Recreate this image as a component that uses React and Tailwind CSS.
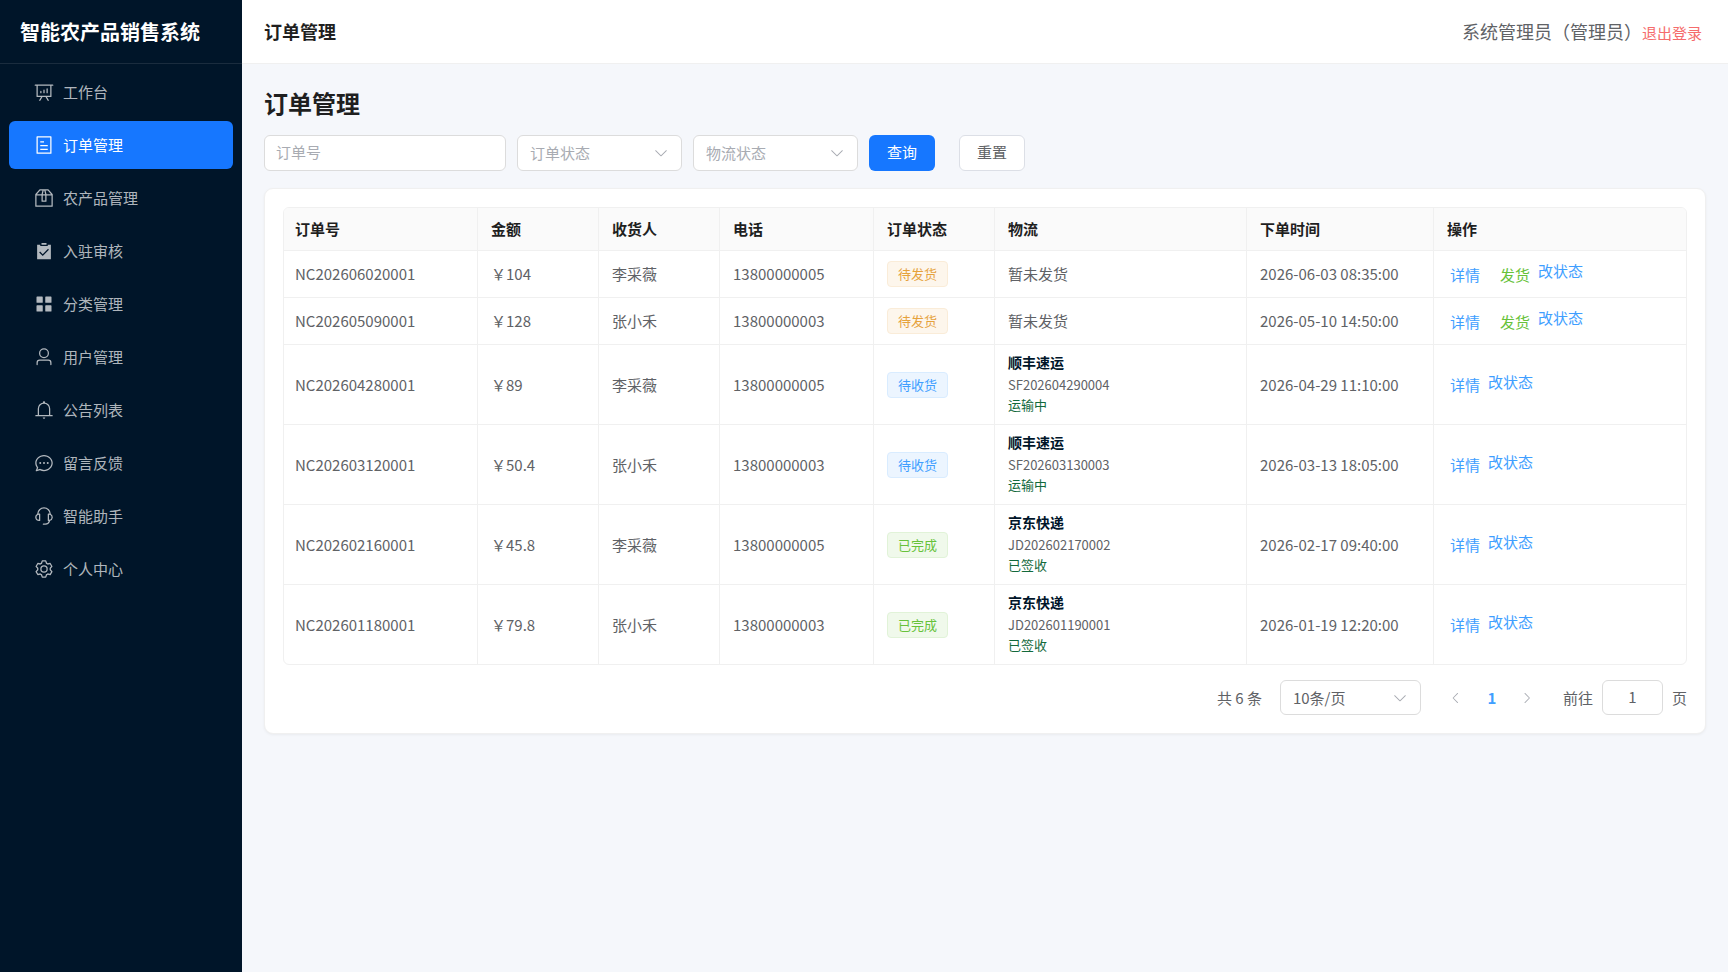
import React, { useState } from 'react';

const ICONS = {
  analysis: 'm665.216 768 110.848 192h-73.856L591.36 768H433.024L322.176 960H248.32l110.848-192H160a32 32 0 0 1-32-32V192H64a32 32 0 0 1 0-64h896a32 32 0 1 1 0 64h-64v544a32 32 0 0 1-32 32zM832 192H192v512h640zM352 448a32 32 0 0 1 32 32v64a32 32 0 0 1-64 0v-64a32 32 0 0 1 32-32m160-64a32 32 0 0 1 32 32v128a32 32 0 0 1-64 0V416a32 32 0 0 1 32-32m160-64a32 32 0 0 1 32 32v192a32 32 0 1 1-64 0V352a32 32 0 0 1 32-32',
  tickets: 'M192 128v768h640V128zm-32-64h704a32 32 0 0 1 32 32v832a32 32 0 0 1-32 32H160a32 32 0 0 1-32-32V96a32 32 0 0 1 32-32m160 448h384v64H320zm0-192h192v64H320zm0 384h384v64H320z',
  box: 'M317.056 128 128 344.064V896h768V344.064L706.944 128zm-14.528-64h418.944a32 32 0 0 1 24.064 10.88l206.528 236.096A32 32 0 0 1 960 332.032V928a32 32 0 0 1-32 32H96a32 32 0 0 1-32-32V332.032a32 32 0 0 1 7.936-21.12L278.4 75.008A32 32 0 0 1 302.528 64M64 320h896v64H64zM448 327.872V640h128V327.872L526.08 128h-28.16zM448 64h128l64 256v352a32 32 0 0 1-32 32H416a32 32 0 0 1-32-32V320z',
  checked: 'M704 192h160v736H160V192h160.064v64H704zM311.616 537.28l-45.312 45.248L447.36 763.52l316.8-316.8-45.312-45.184L447.36 673.024zM384 192V96h256v96z',
  menu: 'M160 448a32 32 0 0 1-32-32V160.064a32 32 0 0 1 32-32h256a32 32 0 0 1 32 32V416a32 32 0 0 1-32 32zm448 0a32 32 0 0 1-32-32V160.064a32 32 0 0 1 32-32h255.936a32 32 0 0 1 32 32V416a32 32 0 0 1-32 32zM160 896a32 32 0 0 1-32-32V608a32 32 0 0 1 32-32h256a32 32 0 0 1 32 32v256a32 32 0 0 1-32 32zm448 0a32 32 0 0 1-32-32V608a32 32 0 0 1 32-32h255.936a32 32 0 0 1 32 32v256a32 32 0 0 1-32 32z',
  user: 'M512 512a192 192 0 1 0 0-384 192 192 0 0 0 0 384m0 64a256 256 0 1 1 0-512 256 256 0 0 1 0 512m320 320v-96a96 96 0 0 0-96-96H288a96 96 0 0 0-96 96v96a32 32 0 1 1-64 0v-96a160 160 0 0 1 160-160h448a160 160 0 0 1 160 160v96a32 32 0 1 1-64 0',
  bell: 'M512 64a64 64 0 0 1 64 64v64H448v-64a64 64 0 0 1 64-64M256 768h512V448a256 256 0 1 0-512 0zm256-640a320 320 0 0 1 320 320v384H192V448a320 320 0 0 1 320-320M96 768h832q32 0 32 32t-32 32H96q-32 0-32-32t32-32m352 128h128a64 64 0 0 1-128 0',
  chat: 'm174.72 855.68 135.296-45.12 23.68 11.84C388.096 849.536 448.576 864 512 864c211.84 0 384-166.784 384-352S723.84 160 512 160 128 326.784 128 512c0 69.12 24.96 139.264 70.848 199.232l22.08 28.8-46.272 115.584zm-45.248 82.56A32 32 0 0 1 89.6 896l58.368-145.92C94.72 680.32 64 596.864 64 512 64 299.904 256 96 512 96s448 203.904 448 416-192 416-448 416a461.06 461.06 0 0 1-206.912-48.384l-175.616 58.56zM512 563.2a51.2 51.2 0 1 1 0-102.4 51.2 51.2 0 0 1 0 102.4m192 0a51.2 51.2 0 1 1 0-102.4 51.2 51.2 0 0 1 0 102.4m-384 0a51.2 51.2 0 1 1 0-102.4 51.2 51.2 0 0 1 0 102.4',
  service: 'M864 409.6a192 192 0 0 1-37.888 349.44A256.064 256.064 0 0 1 576 960h-96a32 32 0 1 1 0-64h96a192.064 192.064 0 0 0 181.12-128H736a32 32 0 0 1-32-32V416a32 32 0 0 1 32-32h32c10.368 0 20.544.832 30.528 2.432a288 288 0 0 0-573.056 0A193 193 0 0 1 256 384h32a32 32 0 0 1 32 32v320a32 32 0 0 1-32 32h-32a192 192 0 0 1-96-358.4 352 352 0 0 1 704 0M256 448a128 128 0 1 0 0 256zm640 128a128 128 0 0 0-128-128v256a128 128 0 0 0 128-128',
  setting: 'M600.704 64a32 32 0 0 1 30.464 22.208l35.2 109.376c14.784 7.232 28.928 15.36 42.432 24.512l112.384-24.192a32 32 0 0 1 34.432 15.36L944.32 364.8a32 32 0 0 1-4.032 37.504l-77.12 85.12a357 357 0 0 1 0 49.024l77.12 85.248a32 32 0 0 1 4.032 37.504l-88.704 153.6a32 32 0 0 1-34.432 15.296L708.8 803.904c-13.44 9.088-27.648 17.28-42.368 24.512l-35.264 109.376A32 32 0 0 1 600.704 960H423.296a32 32 0 0 1-30.464-22.208L357.696 828.48a352 352 0 0 1-42.56-24.64l-112.32 24.256a32 32 0 0 1-34.432-15.36L79.68 659.2a32 32 0 0 1 4.032-37.504l77.12-85.248a357 357 0 0 1 0-48.896l-77.12-85.248A32 32 0 0 1 79.68 364.8l88.704-153.6a32 32 0 0 1 34.432-15.296l112.32 24.256c13.568-9.152 27.776-17.408 42.56-24.64l35.2-109.312A32 32 0 0 1 423.232 64H600.64zm-23.424 64H446.72l-36.352 113.088-24.512 11.968a294 294 0 0 0-34.816 20.096l-22.656 15.36-116.224-25.088-65.28 113.152 79.68 88.192-1.92 27.136a293 293 0 0 0 0 40.192l1.92 27.136-79.808 88.192 65.344 113.152 116.224-25.024 22.656 15.296a294 294 0 0 0 34.816 20.096l24.512 11.968L446.72 896h130.688l36.48-113.152 24.448-11.904a288 288 0 0 0 34.752-20.096l22.592-15.296 116.288 25.024 65.28-113.152-79.744-88.192 1.92-27.136a293 293 0 0 0 0-40.256l-1.92-27.136 79.808-88.128-65.344-113.152-116.288 24.96-22.592-15.232a288 288 0 0 0-34.752-20.096l-24.448-11.904L577.344 128zM512 320a192 192 0 1 1 0 384 192 192 0 0 1 0-384m0 64a128 128 0 1 0 0 256 128 128 0 0 0 0-256',
  down: 'M831.872 340.864 512 652.672 192.128 340.864a30.59 30.59 0 0 0-42.752 0 29.12 29.12 0 0 0 0 41.6L489.664 714.24a32 32 0 0 0 44.672 0l340.288-331.712a29.12 29.12 0 0 0 0-41.728 30.59 30.59 0 0 0-42.752 0z',
  left: 'M609.408 149.376 277.76 489.6a32 32 0 0 0 0 44.672l331.648 340.352a29.12 29.12 0 0 0 41.728 0 30.59 30.59 0 0 0 0-42.752L339.264 511.936l311.872-319.872a30.59 30.59 0 0 0 0-42.688 29.12 29.12 0 0 0-41.728 0z',
  right: 'M340.864 149.312a30.59 30.59 0 0 0 0 42.752L652.736 512 340.864 831.872a30.59 30.59 0 0 0 0 42.752 29.12 29.12 0 0 0 41.728 0L714.24 534.336a32 32 0 0 0 0-44.672L382.592 149.376a29.12 29.12 0 0 0-41.728 0z'
};

const MENU = [
  { icon: 'analysis', label: '工作台' },
  { icon: 'tickets', label: '订单管理' },
  { icon: 'box', label: '农产品管理' },
  { icon: 'checked', label: '入驻审核' },
  { icon: 'menu', label: '分类管理' },
  { icon: 'user', label: '用户管理' },
  { icon: 'bell', label: '公告列表' },
  { icon: 'chat', label: '留言反馈' },
  { icon: 'service', label: '智能助手' },
  { icon: 'setting', label: '个人中心' }
];

const ORDERS = [
  { no: 'NC202606020001', amount: '104', receiver: '李采薇', phone: '13800000005', status: '待发货', time: '2026-06-03 08:35:00' },
  { no: 'NC202605090001', amount: '128', receiver: '张小禾', phone: '13800000003', status: '待发货', time: '2026-05-10 14:50:00' },
  { no: 'NC202604280001', amount: '89', receiver: '李采薇', phone: '13800000005', status: '待收货', company: '顺丰速运', trackingNo: 'SF202604290004', progress: '运输中', time: '2026-04-29 11:10:00' },
  { no: 'NC202603120001', amount: '50.4', receiver: '张小禾', phone: '13800000003', status: '待收货', company: '顺丰速运', trackingNo: 'SF202603130003', progress: '运输中', time: '2026-03-13 18:05:00' },
  { no: 'NC202602160001', amount: '45.8', receiver: '李采薇', phone: '13800000005', status: '已完成', company: '京东快递', trackingNo: 'JD202602170002', progress: '已签收', time: '2026-02-17 09:40:00' },
  { no: 'NC202601180001', amount: '79.8', receiver: '张小禾', phone: '13800000003', status: '已完成', company: '京东快递', trackingNo: 'JD202601190001', progress: '已签收', time: '2026-01-19 12:20:00' }
];

const COLUMNS = [
  { title: '订单号', width: 'w-[194px]' },
  { title: '金额', width: 'w-[121px]' },
  { title: '收货人', width: 'w-[121px]' },
  { title: '电话', width: 'w-[154px]' },
  { title: '订单状态', width: 'w-[121px]' },
  { title: '物流', width: 'w-[252px]' },
  { title: '下单时间', width: 'w-[187px]' },
  { title: '操作', width: '' }
];

const TAG_STYLES = {
  待发货: 'border-[#faecd8] bg-[#fdf6ec] text-[#e6a23c]',
  待收货: 'border-[#d9ecff] bg-[#ecf5ff] text-[#409eff]',
  已完成: 'border-[#e1f3d8] bg-[#f0f9eb] text-[#67c23a]'
};

const Icon = ({ name, className }) => (
  <svg viewBox="0 0 1024 1024" fill="currentColor" className={className} aria-hidden="true">
    <path d={ICONS[name]} />
  </svg>
);

const SelectBox = ({ label, options, value, onChange, className }) => (
  <div className={`relative ${className}`}>
    <select
      aria-label={label}
      value={value}
      onChange={(e) => onChange(e.target.value)}
      className={`h-full w-full appearance-none rounded-md border border-[#dcdcdc] bg-white pl-3 pr-8 outline-none ${value ? 'text-[#606266]' : 'text-[#a8abb2]'}`}
    >
      {options.map((option) => (
        <option key={option.value} value={option.value}>{option.text}</option>
      ))}
    </select>
    <Icon name="down" className="pointer-events-none absolute right-[13px] top-1/2 h-4 w-4 -translate-y-1/2 text-[#a8abb2]" />
  </div>
);

const Logistics = ({ order }) => {
  if (!order.company) {
    return <span>暂未发货</span>;
  }
  return (
    <div className="pb-1 text-[13px] leading-5">
      <div className="mb-[2px] text-sm font-bold leading-[22px] text-[#001529]">{order.company}</div>
      <div>{order.trackingNo}</div>
      <div className="text-[#12693c]">{order.progress}</div>
    </div>
  );
};

const App = () => {
  const [active, setActive] = useState('订单管理');
  const [orderNo, setOrderNo] = useState('');
  const [orderStatus, setOrderStatus] = useState('');
  const [shipStatus, setShipStatus] = useState('');
  const [pageSize, setPageSize] = useState('10');
  const [page, setPage] = useState('1');

  const handleReset = () => {
    setOrderNo('');
    setOrderStatus('');
    setShipStatus('');
  };

  return (
    <div className="flex min-h-screen bg-[#f5f7fb] font-['Noto_Sans_CJK_SC',sans-serif] text-[15px] leading-6 text-[#606266]">
      {/* Sidebar */}
      <aside className="w-[242px] shrink-0 bg-[#001529]">
        <div className="flex h-16 items-center border-b border-white/10 px-5 text-xl font-bold text-white">
          智能农产品销售系统
        </div>
        <nav className="flex flex-col gap-[5px] px-[9px] py-1">
          {MENU.map((item) => (
            <a
              key={item.label}
              href="#"
              onClick={() => setActive(item.label)}
              className={`flex h-12 items-center gap-[9px] rounded-md pl-[25px] ${active === item.label ? 'bg-[#1677ff] text-white' : 'text-white/70'}`}
            >
              <Icon name={item.icon} className="h-5 w-5" />
              <span>{item.label}</span>
            </a>
          ))}
        </nav>
      </aside>

      <div className="flex min-w-0 flex-1 flex-col">
        {/* Header */}
        <header className="flex h-16 items-center justify-between border-b border-[#f0f0f0] bg-white pb-[2px] pl-[22px] pr-[26px]">
          <span className="text-lg font-bold text-[#1f1f1f]">订单管理</span>
          <div className="flex items-center">
            <span className="text-lg">系统管理员（管理员）</span>
            <button type="button" className="pt-1 text-[#f56c6c]">退出登录</button>
          </div>
        </header>

        <main className="px-[22px] pt-[21px]">
          <h1 className="text-2xl font-bold leading-9 text-[#1f1f1f]">订单管理</h1>

          {/* Filters */}
          <form className="mt-[14px] flex h-9 gap-[11px]" onSubmit={(e) => e.preventDefault()}>
            <input
              type="text"
              aria-label="订单号"
              placeholder="订单号"
              value={orderNo}
              onChange={(e) => setOrderNo(e.target.value)}
              className="w-[242px] rounded-md border border-[#dcdcdc] bg-white px-[11px] pb-[2px] outline-none placeholder:text-[#a8abb2]"
            />
            <SelectBox
              label="订单状态"
              value={orderStatus}
              onChange={setOrderStatus}
              className="w-[165px]"
              options={[
                { value: '', text: '订单状态' },
                { value: '待发货', text: '待发货' },
                { value: '待收货', text: '待收货' },
                { value: '已完成', text: '已完成' }
              ]}
            />
            <SelectBox
              label="物流状态"
              value={shipStatus}
              onChange={setShipStatus}
              className="w-[165px]"
              options={[
                { value: '', text: '物流状态' },
                { value: '运输中', text: '运输中' },
                { value: '已签收', text: '已签收' }
              ]}
            />
            <button type="submit" className="w-[66px] rounded-md bg-[#1677ff] pb-[2px] text-white">查询</button>
            <button
              type="button"
              onClick={handleReset}
              className="ml-[13px] w-[66px] rounded-md border border-[#dcdfe6] bg-white pb-[2px]"
            >
              重置
            </button>
          </form>

          {/* Order table */}
          <section className="mt-[17px] rounded-[9px] border border-[#f0f0f0] bg-white p-[18px] shadow-[0_1px_3px_rgba(0,0,0,0.05)]">
            <div className="overflow-hidden rounded-md border border-[#f0f0f0]">
              <table className="w-full table-fixed border-separate border-spacing-0 text-left">
                <thead>
                  <tr className="h-[43px] bg-[#fafafa] text-[#1f1f1f]">
                    {COLUMNS.map((col) => (
                      <th
                        key={col.title}
                        scope="col"
                        className={`border-b border-r border-[#f0f0f0] px-[13px] font-bold first:pl-[11px] last:border-r-0 ${col.width}`}
                      >
                        {col.title}
                      </th>
                    ))}
                  </tr>
                </thead>
                <tbody className="[&_td]:border-b [&_td]:border-r [&_td]:border-[#f0f0f0] [&_td]:px-[13px] [&_td:first-child]:pl-[11px] [&_td:last-child]:border-r-0 [&_tr:last-child_td]:border-b-0">
                  {ORDERS.map((order) => (
                    <tr key={order.no} className={order.company ? 'h-20 last:h-[79px]' : 'h-[47px]'}>
                      <td>{order.no}</td>
                      <td>￥{order.amount}</td>
                      <td>{order.receiver}</td>
                      <td>{order.phone}</td>
                      <td>
                        <span className={`inline-flex h-[26px] items-center rounded border px-[10px] align-middle text-[13px] ${TAG_STYLES[order.status]}`}>
                          {order.status}
                        </span>
                      </td>
                      <td><Logistics order={order} /></td>
                      <td>{order.time}</td>
                      <td>
                        <div className="flex items-center pl-[3px] text-[#409eff]">
                          <button type="button" className="pt-px">详情</button>
                          {order.status === '待发货' && (
                            <button type="button" className="ml-5 pt-px text-[#67c23a]">发货</button>
                          )}
                          <button type="button" className="ml-2 pb-[6px]">改状态</button>
                        </div>
                      </td>
                    </tr>
                  ))}
                </tbody>
              </table>
            </div>

            {/* Pagination */}
            <div className="mt-[15px] flex h-[35px] items-center justify-end">
              <span className="mr-[18px]">共 6 条</span>
              <SelectBox
                label="每页条数"
                value={pageSize}
                onChange={setPageSize}
                className="h-full w-[141px]"
                options={[
                  { value: '10', text: '10条/页' },
                  { value: '20', text: '20条/页' },
                  { value: '50', text: '50条/页' }
                ]}
              />
              <div className="ml-[18px] flex text-[#a8abb2]">
                <button type="button" aria-label="上一页" disabled className="flex w-[35px] items-center justify-center">
                  <Icon name="left" className="h-[14px] w-[14px]" />
                </button>
                <button type="button" className="w-9 font-bold text-[#409eff]">1</button>
                <button type="button" aria-label="下一页" disabled className="flex w-[35px] items-center justify-center">
                  <Icon name="right" className="h-[14px] w-[14px]" />
                </button>
              </div>
              <label className="ml-[18px] flex h-full items-center gap-[9px]">
                前往
                <input
                  type="text"
                  value={page}
                  onChange={(e) => setPage(e.target.value)}
                  className="h-full w-[61px] rounded-md border border-[#dcdcdc] bg-white pb-[2px] text-center outline-none"
                />
                页
              </label>
            </div>
          </section>
        </main>
      </div>
    </div>
  );
};

export default App;
